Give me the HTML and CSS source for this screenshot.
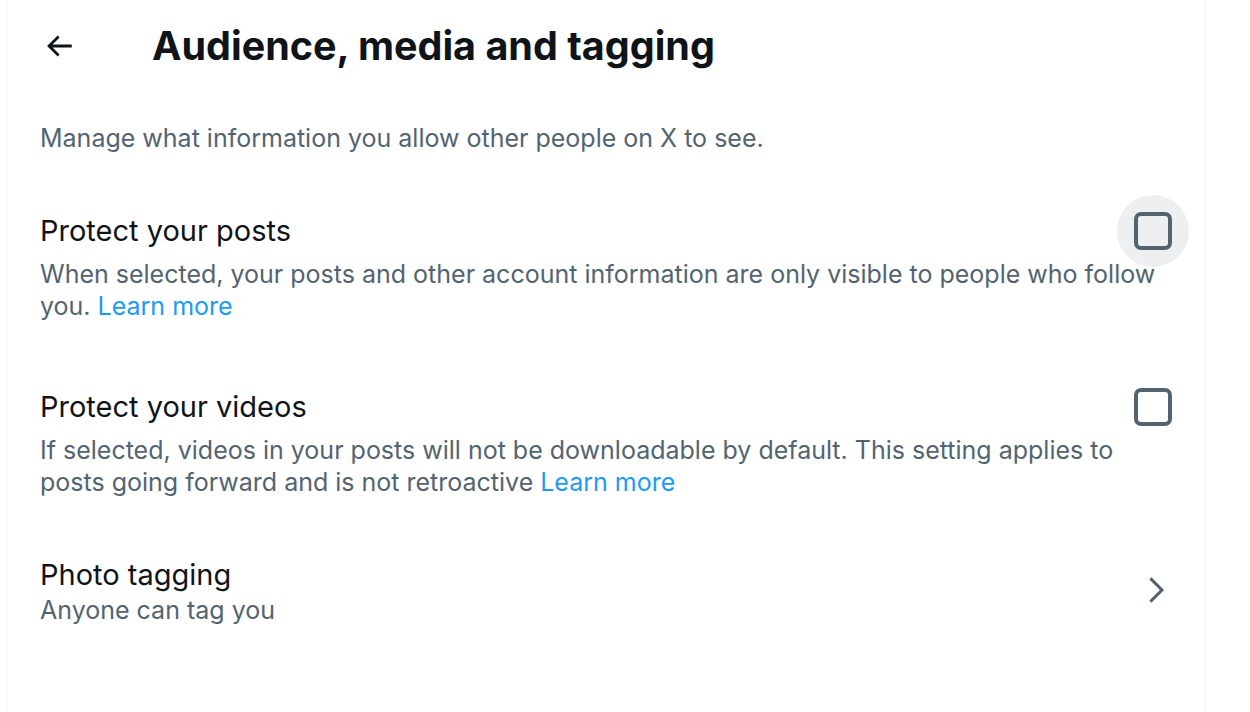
FILE: index.html
```html
<!DOCTYPE html>
<html lang="en">
<head>
<meta charset="utf-8">
<title>Audience, media and tagging</title>
<link rel="stylesheet" href="styles.css">
</head>
<body>
<main class="column">
  <header class="header">
    <div class="back">
      <svg viewBox="0 0 24 24" width="34" height="34" aria-hidden="true"><path d="M7.414 13l5.043 5.04-1.414 1.42L3.586 12l7.457-7.46 1.414 1.42L7.414 11H21v2H7.414z" fill="#0f1419"/></svg>
    </div>
    <h1 class="title">Audience, media and tagging</h1>
  </header>
  <p class="intro">Manage what information you allow other people on X to see.</p>

  <section class="setting first">
    <div class="setting-head">
      <div class="label">Protect your posts</div>
      <div class="check hover"><span class="box"></span></div>
    </div>
    <div class="desc">When selected, your posts and other account information are only visible to people who follow you. <a class="link" href="#">Learn more</a></div>
  </section>

  <section class="setting second">
    <div class="setting-head">
      <div class="label">Protect your videos</div>
      <div class="check"><span class="box"></span></div>
    </div>
    <div class="desc">If selected, videos in your posts will not be downloadable by default. This setting applies to posts going forward and is not retroactive <a class="link" href="#">Learn more</a></div>
  </section>

  <section class="nav-row">
    <div class="nav-text">
      <div class="label">Photo tagging</div>
      <div class="sub">Anyone can tag you</div>
    </div>
    <svg class="chev" viewBox="0 0 24 24" width="36" height="36" aria-hidden="true"><path d="M14.586 12L7.543 4.96l1.414-1.42L17.414 12l-8.457 8.46-1.414-1.42L14.586 12z" fill="#536471"/></svg>
  </section>
</main>
</body>
</html>
```
FILE: styles.css
```css
html, body {
  margin: 0;
  padding: 0;
  background: #ffffff;
}
body {
  font-family: "Inter", "Liberation Sans", sans-serif;
  color: #0f1419;
  height: 712px;
  overflow: hidden;
}
.column {
  margin-left: 6px;
  width: 1200px;
  height: 712px;
  border-left: 1px solid #eff3f4;
  border-right: 1px solid #eff3f4;
  padding: 0 33px;
  box-sizing: border-box;
}
.header {
  display: flex;
  align-items: center;
  height: 92px;
}
.back {
  width: 38px;
  height: 38px;
  display: flex;
  align-items: center;
  justify-content: center;
  margin-right: 74px;
}
.title {
  margin: 0;
  font-size: 39.5px;
  font-weight: 700;
  letter-spacing: 0;
  line-height: 44px;
}
.intro {
  margin: 30px 0 0;
  font-size: 25px;
  line-height: 32px;
  color: #536471;
}
.setting.first { margin-top: 61px; }
.setting.second { margin-top: 69px; }
.setting-head {
  display: flex;
  align-items: center;
  justify-content: space-between;
}
.label {
  font-size: 29px;
  line-height: 32px;
  color: #0f1419;
}
.desc {
  margin-top: 11px;
  font-size: 25px;
  line-height: 32px;
  color: #536471;
}
.sub {
  margin-top: 3px;
  font-size: 25px;
  line-height: 32px;
  color: #536471;
}
.link {
  color: #1d9bf0;
  text-decoration: none;
}
.check {
  width: 72px;
  height: 72px;
  margin: -20px -17px -20px 0;
  border-radius: 50%;
  display: flex;
  align-items: center;
  justify-content: center;
  flex-shrink: 0;
}
.check.hover { background: #eeeff1; }
.box {
  width: 38px;
  height: 38px;
  box-sizing: border-box;
  border: 4.5px solid #536471;
  border-radius: 7px;
}
.nav-row {
  display: flex;
  align-items: center;
  justify-content: space-between;
  margin-top: 61px;
}
.chev { margin-right: -2px; margin-top: -6px; }
```
